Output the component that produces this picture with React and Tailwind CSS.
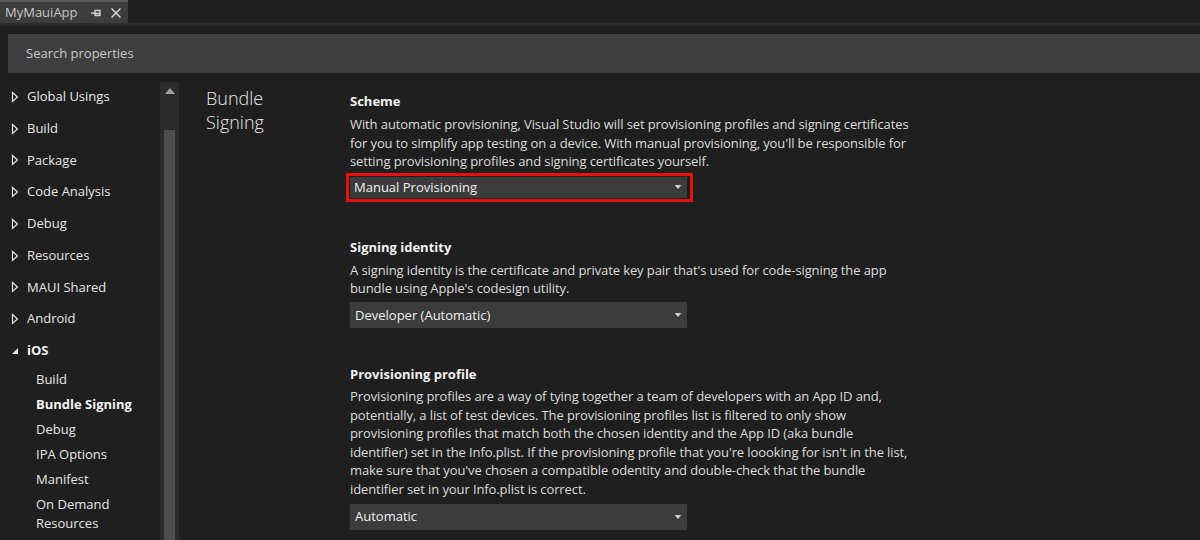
import React from "react";

const font = { fontFamily: '"Open Sans", "Noto Sans", sans-serif' };

function Hollow() {
  return (
    <svg width="8" height="12" viewBox="0 0 8 12" className="shrink-0">
      <path d="M1.5 1.5 L6.5 6 L1.5 10.5 Z" fill="none" stroke="#e6e6e6" strokeWidth="1.2" />
    </svg>
  );
}

function Filled() {
  return (
    <svg width="8" height="8" viewBox="0 0 8 8" className="shrink-0">
      <path d="M7 1 L7 7 L1 7 Z" fill="#e6e6e6" />
    </svg>
  );
}

function Arrow() {
  return (
    <svg width="8" height="4" viewBox="0 0 8 4" className="shrink-0">
      <path d="M0.5 0 L7.5 0 L4 4 Z" fill="#d0d0d0" />
    </svg>
  );
}

function Select({ label }) {
  return (
    <div className="w-[337px] h-[26px] bg-[#3c3c3c] flex items-center justify-between pl-[5px] pr-[5px] text-[13px] text-[#f0f0f0]">
      <span>{label}</span>
      <Arrow />
    </div>
  );
}

const groups = ["Global Usings", "Build", "Package", "Code Analysis", "Debug", "Resources", "MAUI Shared", "Android"];
const iosItems = ["Build", "Bundle Signing", "Debug", "IPA Options", "Manifest"];

export default function App() {
  return (
    <div className="w-[1200px] h-[540px] bg-[#1f1f1f] overflow-hidden text-[#e6e6e6]" style={font}>
      {/* tab strip */}
      <div className="h-[23px] flex">
        <div className="w-[128px] h-[23px] bg-[#3d3d3d] border-t-2 border-[#585858] flex items-center pl-[5px] gap-[12px] text-[13px] text-[#c8c8c8]">
          <span className="leading-none">MyMauiApp</span>
          <div className="flex items-center gap-[8px]">
            <svg width="12" height="10" viewBox="0 0 12 10">
              <path d="M1 5 H5 M5 2 V8 M5 2.5 H10 V7.5 H5 M5 5.5 H10" stroke="#d0d0d0" strokeWidth="1.4" fill="none" />
            </svg>
            <svg width="12" height="12" viewBox="0 0 12 12">
              <path d="M1.5 1.5 L10.5 10.5 M10.5 1.5 L1.5 10.5" stroke="#d8d8d8" strokeWidth="1.5" />
            </svg>
          </div>
        </div>
      </div>
      <div className="h-[3px] bg-[#2c2c2c] border-b border-[#262626]" />
      {/* search */}
      <div className="pl-[8px] pt-[8px]">
        <div className="h-[39px] bg-[#3f3f3f] flex items-center pl-[18px] text-[13px] text-[#c8c8c8]">
          Search properties
        </div>
      </div>
      <div className="flex mt-[7px]">
        {/* sidebar */}
        <div className="w-[160px] shrink-0 pt-[1px]">
          {groups.map((g) => (
            <div key={g} className="h-[31.75px] flex items-center pl-[11px] gap-[8px] text-[13px] text-[#e6e6e6]">
              <Hollow />
              <span>{g}</span>
            </div>
          ))}
          <div className="h-[31.75px] flex items-center pl-[11px] gap-[8px] text-[13px] font-bold text-[#f2f2f2]">
            <Filled />
            <span>iOS</span>
          </div>
          {iosItems.map((i) => (
            <div key={i} className={"h-[25px] flex items-center pl-[36px] text-[13px] " + (i === "Bundle Signing" ? "font-bold text-[#f2f2f2]" : "text-[#e6e6e6]")}>
              {i}
            </div>
          ))}
          <div className="pl-[36px] pt-[3px] text-[13px] leading-[19px] text-[#e6e6e6]">
            On Demand<br />Resources
          </div>
        </div>
        {/* scrollbar */}
        <div className="w-[19px] shrink-0 bg-[#2b2b2b] h-[460px] mt-[2px] flex flex-col items-center">
          <svg width="10" height="6" viewBox="0 0 10 6" className="mt-[6px]">
            <path d="M0 6 L5 0 L10 6 Z" fill="#a0a0a0" />
          </svg>
          <div className="w-[11px] bg-[#4e4e4e] mt-[36px] flex-1 ml-[-1px]" />
        </div>
        {/* main pane */}
        <div className="flex pl-[27px] pt-[6px]">
          <div className="w-[144px] text-[18px] leading-[24px] text-[#e8e8e8] font-light">
            Bundle<br />Signing
          </div>
          <div className="flex flex-col text-[13px] tracking-[-0.1px] leading-[18.6px] text-[#dcdcdc] pt-[5px]">
            <div className="font-bold text-[#f2f2f2] leading-[20px] tracking-normal">Scheme</div>
            <div className="mt-[4px] whitespace-nowrap">
              With automatic provisioning, Visual Studio will set provisioning profiles and signing certificates<br />
              for you to simplify app testing on a device. With manual provisioning, you'll be responsible for<br />
              setting provisioning profiles and signing certificates yourself.
            </div>
            <div className="mt-[2px] -ml-[4px] w-[347px] h-[29px] border-[3px] border-[#e81010] p-px">
              <div className="w-[337px] h-[21px] bg-[#3c3c3c] flex items-center justify-between pl-[4px] pr-[5px] text-[13px] tracking-normal text-[#f0f0f0]">
                <span>Manual Provisioning</span>
                <Arrow />
              </div>
            </div>

            <div className="font-bold text-[#f2f2f2] leading-[20px] tracking-normal mt-[35px]">Signing identity</div>
            <div className="mt-[4px] whitespace-nowrap">
              A signing identity is the certificate and private key pair that's used for code-signing the app<br />
              bundle using Apple's codesign utility.
            </div>
            <div className="mt-[4px] tracking-normal">
              <Select label="Developer (Automatic)" />
            </div>

            <div className="font-bold text-[#f2f2f2] leading-[20px] tracking-normal mt-[36px]">Provisioning profile</div>
            <div className="mt-[3px] whitespace-nowrap">
              Provisioning profiles are a way of tying together a team of developers with an App ID and,<br />
              potentially, a list of test devices. The provisioning profiles list is filtered to only show<br />
              provisioning profiles that match both the chosen identity and the App ID (aka bundle<br />
              identifier) set in the Info.plist. If the provisioning profile that you're loooking for isn't in the list,<br />
              make sure that you've chosen a compatible odentity and double-check that the bundle<br />
              identifier set in your Info.plist is correct.
            </div>
            <div className="mt-[5px] tracking-normal">
              <Select label="Automatic" />
            </div>
          </div>
        </div>
      </div>
    </div>
  );
}
